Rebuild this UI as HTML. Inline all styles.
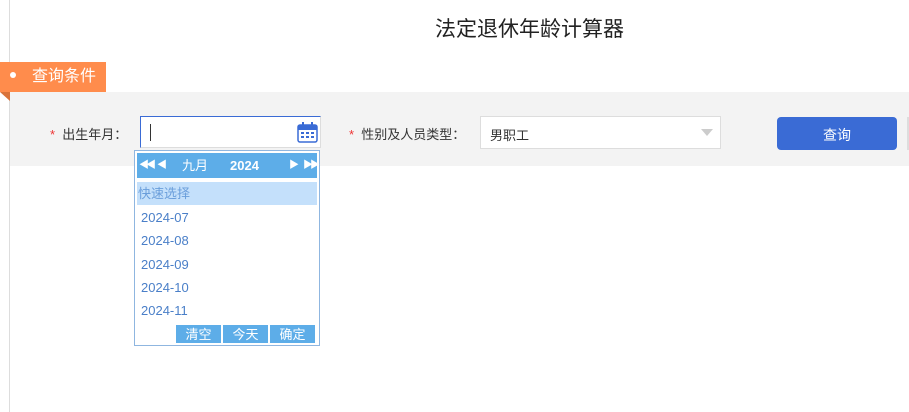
<!DOCTYPE html>
<html><head><meta charset="utf-8"><style>
*{margin:0;padding:0;box-sizing:border-box}
body{width:909px;height:412px;background:#fff;font-family:"Liberation Sans","Noto Sans CJK SC",sans-serif;position:relative;overflow:hidden;font-size:13px;color:#333}
.abs{position:absolute}
</style></head><body>
<div class="abs" style="left:9px;top:0;width:1px;height:412px;background:#ddd"></div>
<div class="abs" style="left:435px;top:13px;font-size:21px;color:#222">法定退休年龄计算器</div>
<div class="abs" style="left:10px;top:92px;width:899px;height:74px;background:#f3f3f3"></div>
<div class="abs" style="left:0;top:62px;width:106px;height:30px;background:#ff8c4c;color:#fff;font-size:16px;line-height:30px;padding-left:32px">查询条件</div>
<div class="abs" style="left:10px;top:72px;width:6px;height:6px;border-radius:50%;background:#fff"></div>
<div class="abs" style="left:0;top:92px;width:0;height:0;border-top:9px solid #d9733a;border-left:10px solid transparent"></div>
<div class="abs" style="left:50px;top:124px;font-size:13px"><span style="color:#e33">*</span>&nbsp; 出生年月：</div>
<div class="abs" style="left:140px;top:116px;width:181px;height:32px;background:#fff;border:1px solid #ddd;border-left-color:#3a6bd5;border-top-color:#3a6bd5"></div>
<div class="abs" style="left:150px;top:124px;width:1px;height:17px;background:#333"></div>
<svg class="abs" style="left:297px;top:122px" width="21" height="21" viewBox="0 0 21 21"><rect x="1" y="3" width="19" height="17" rx="2" fill="#fff" stroke="#3a6bd5" stroke-width="1.5"/><rect x="1" y="3" width="19" height="5" fill="#3a6bd5"/><rect x="5" y="0" width="2" height="5" fill="#3a6bd5"/><rect x="14" y="0" width="2" height="5" fill="#3a6bd5"/><g fill="#3a6bd5"><rect x="4" y="10" width="3" height="2"/><rect x="9" y="10" width="3" height="2"/><rect x="14" y="10" width="3" height="2"/><rect x="4" y="14" width="3" height="2"/><rect x="9" y="14" width="3" height="2"/><rect x="14" y="14" width="3" height="2"/></g></svg>
<div class="abs" style="left:349px;top:124px"><span style="color:#e33">*</span>&nbsp; 性别及人员类型：</div>
<div class="abs" style="left:480px;top:116px;width:241px;height:33px;background:#fff;border:1px solid #ddd;padding:8px 9px;font-size:13px">男职工</div>
<div class="abs" style="left:701px;top:129px;border-left:6px solid transparent;border-right:6px solid transparent;border-top:7px solid #ccc"></div>
<div class="abs" style="left:777px;top:117px;width:120px;height:33px;background:#3a6bd5;border-radius:4px;color:#fff;text-align:center;line-height:37px;font-size:14px">查询</div>
<div class="abs" style="left:907px;top:117px;width:2px;height:33px;background:#ddd"></div>
<div class="abs" style="left:134px;top:150px;width:186px;height:196px;background:#fff;border:1px solid #8fb6e0"></div>
<div class="abs" style="left:137px;top:153px;width:180px;height:25px;background:#5dade8;color:#fff;font-size:13px;line-height:25px">
<span class="abs" style="left:2px;font-size:10px;letter-spacing:-3px">◀◀</span><span class="abs" style="left:20px;font-size:10px">◀</span>
<span class="abs" style="left:45px">九月</span><span class="abs" style="left:93px;font-weight:bold">2024</span>
<span class="abs" style="left:152px;font-size:10px">▶</span><span class="abs" style="left:166px;font-size:10px;letter-spacing:-3px">▶▶</span></div>
<div class="abs" style="left:137px;top:182px;width:180px;height:23px;background:#c4e0fb;color:#6a9edb;line-height:24px;padding-left:1px">快速选择</div>
<div class="abs" style="left:141px;top:206px;color:#4a7fc8;line-height:23.3px;font-size:13px">2024-07<br>2024-08<br>2024-09<br>2024-10<br>2024-11</div>
<div class="abs" style="left:176px;top:325px;width:45px;height:18px;background:#5dade8;color:#fff;text-align:center;line-height:19px">清空</div>
<div class="abs" style="left:223px;top:325px;width:45px;height:18px;background:#5dade8;color:#fff;text-align:center;line-height:19px">今天</div>
<div class="abs" style="left:270px;top:325px;width:45px;height:18px;background:#5dade8;color:#fff;text-align:center;line-height:19px">确定</div>
</body></html>
